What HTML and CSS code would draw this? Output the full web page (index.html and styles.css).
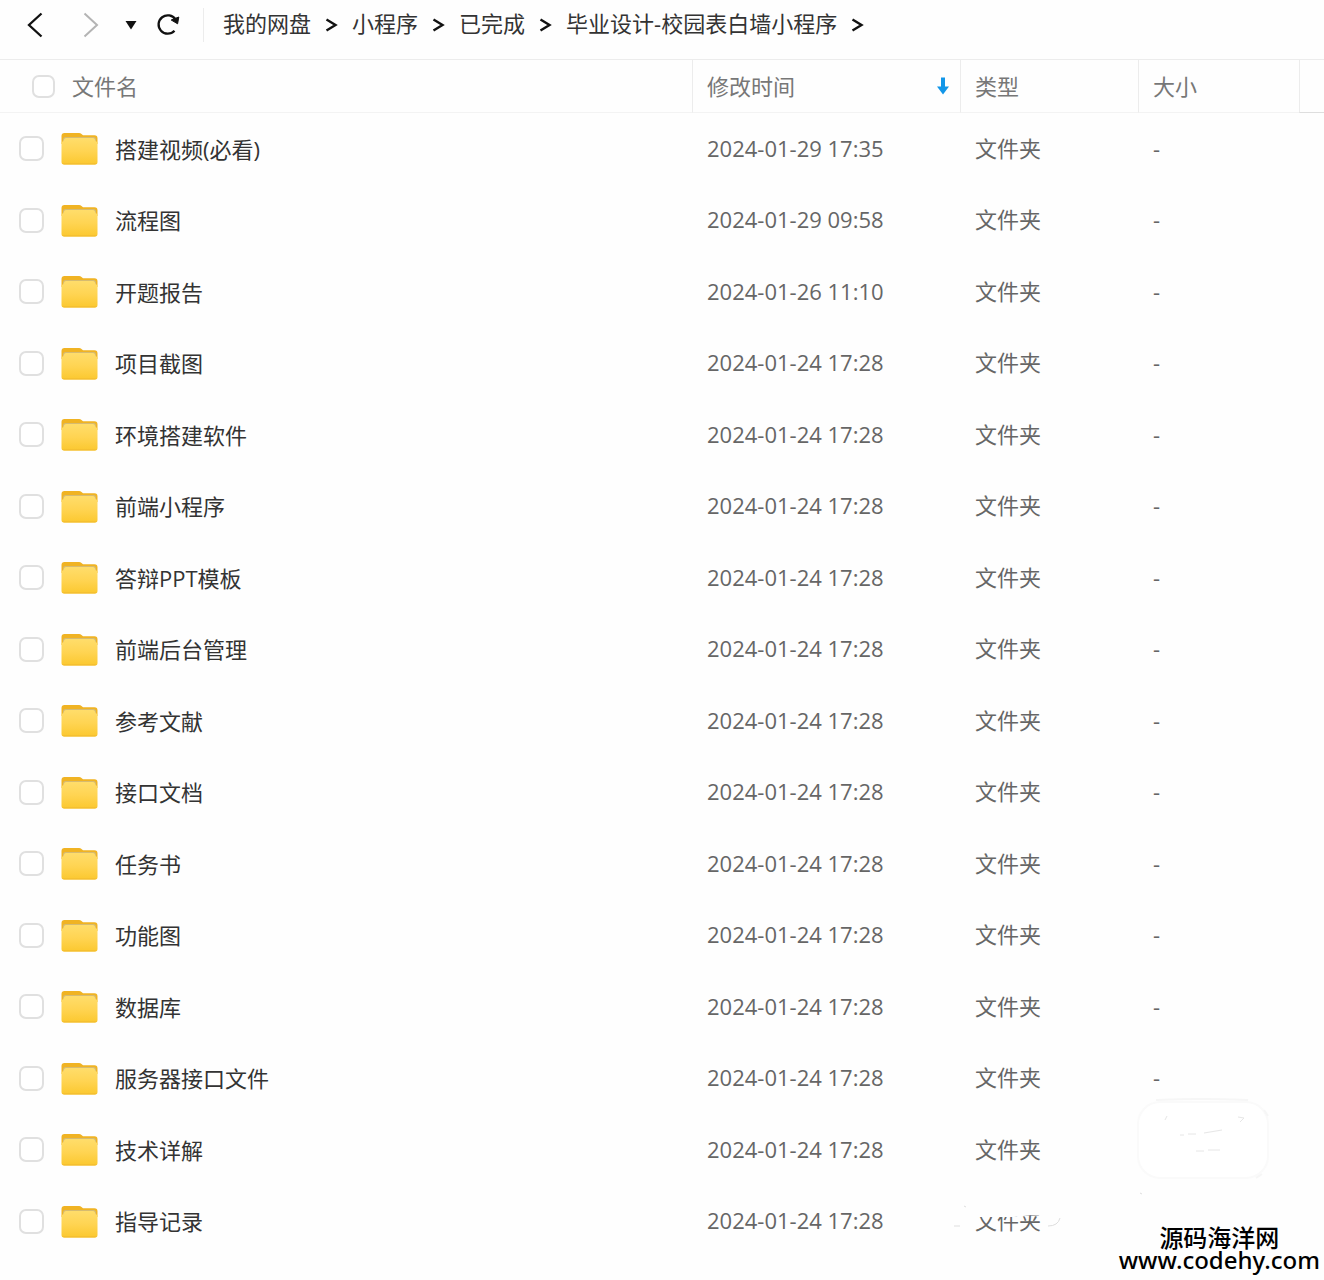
FILE: index.html
```html
<!DOCTYPE html>
<html lang="zh-CN">
<head>
    <meta charset="UTF-8">
    <meta name="viewport" content="width=device-width, initial-scale=1.0">
    <title>毕业设计-校园表白墙小程序</title>
    <link rel="stylesheet" href="styles.css">
</head>
<body>
    <svg class="sprite" width="0" height="0" aria-hidden="true">
        <defs>
            <linearGradient id="folder-front" x1="0" y1="0" x2="0" y2="1">
                <stop offset="0" stop-color="#ffdd6b"/>
                <stop offset="0.5" stop-color="#ffd452"/>
                <stop offset="1" stop-color="#fbc82f"/>
            </linearGradient>
        </defs>
        <symbol id="folder" viewBox="0 0 37 33">
            <path d="M0.500 4Q0.500 1 3.500 1H18Q19.500 1 20.500 2L22 3.200H33.500Q36.500 3.200 36.500 6.500V12H0.500Z" fill="#f0b323"/>
            <path d="M2 7.500Q2 5 4.500 5H32.500Q35 5 35 7.500V11H2Z" fill="#d6bb70"/>
            <path d="M0.500 10Q3 9.500 3 7.500 3.300 6 5 6H32Q33.700 6 34 7.500 34 9.500 36.500 10V30Q36.500 32.500 34 32.500H3Q0.500 32.500 0.500 30Z" fill="url(#folder-front)"/>
            <path d="M1 31.200Q2 32.500 3.500 32.500H33.500Q35 32.500 36 31.200Z" fill="#f3bd30"/>
        </symbol>
        <symbol id="chevron" viewBox="0 0 13 16">
            <path d="M1.500 2.500L10.500 8L1.500 13.500" fill="none" stroke="#111" stroke-width="2.400"/>
        </symbol>
    </svg>

    <div class="page">
        <header class="toolbar">
            <button class="nav-btn back" type="button" aria-label="后退">
                <svg width="16" height="26" viewBox="0 0 16 26"><path d="M14.500 1.500L2 13L14.500 24.500" fill="none" stroke="#111" stroke-width="2.300"/></svg>
            </button>
            <button class="nav-btn forward" type="button" aria-label="前进">
                <svg width="16" height="26" viewBox="0 0 16 26"><path d="M1.500 1.500L14 13L1.500 24.500" fill="none" stroke="#b4b4b4" stroke-width="2"/></svg>
            </button>
            <button class="nav-btn history" type="button" aria-label="历史记录">
                <svg width="12" height="10" viewBox="0 0 12 10"><path d="M0.500 1H11.500L6 9.500Z" fill="#111"/></svg>
            </button>
            <button class="nav-btn refresh" type="button" aria-label="刷新">
                <svg width="24" height="24" viewBox="0 0 24 24">
                    <path d="M18.500 17.800A9.200 9.200 0 1 1 19.500 6.500" fill="none" stroke="#111" stroke-width="2.300"/>
                    <path d="M15.200 7L22.800 4L21.600 10.800Z" fill="#111" stroke="#111" stroke-width="1"/>
                </svg>
            </button>
            <nav class="breadcrumb" aria-label="路径">
                <a href="#">我的网盘</a>
                <svg width="13" height="16"><use href="#chevron"/></svg>
                <a href="#">小程序</a>
                <svg width="13" height="16"><use href="#chevron"/></svg>
                <a href="#">已完成</a>
                <svg width="13" height="16"><use href="#chevron"/></svg>
                <a href="#">毕业设计-校园表白墙小程序</a>
                <svg width="13" height="16"><use href="#chevron"/></svg>
            </nav>
        </header>

        <table class="file-list">
            <colgroup>
                <col class="col-name">
                <col class="col-time">
                <col class="col-type">
                <col class="col-size">
                <col class="col-end">
            </colgroup>
            <thead>
                <tr>
                    <th><label class="select-all"><input type="checkbox"><span>文件名</span></label></th>
                    <th>
                        <button class="sort" type="button">
                            <span>修改时间</span>
                            <svg width="12" height="18" viewBox="0 0 12 18"><path d="M4 0.500H8V9.500H12L6 17.500L0 9.500H4Z" fill="#1296e8"/></svg>
                        </button>
                    </th>
                    <th>类型</th>
                    <th>大小</th>
                    <td></td>
                </tr>
            </thead>
            <tbody>
                <tr>
                    <td><label class="file"><input type="checkbox"><svg width="37" height="33"><use href="#folder"/></svg><span>搭建视频(必看)</span></label></td>
                    <td>2024-01-29 17:35</td>
                    <td>文件夹</td>
                    <td>-</td>
                    <td></td>
                </tr>
                <tr>
                    <td><label class="file"><input type="checkbox"><svg width="37" height="33"><use href="#folder"/></svg><span>流程图</span></label></td>
                    <td>2024-01-29 09:58</td>
                    <td>文件夹</td>
                    <td>-</td>
                    <td></td>
                </tr>
                <tr>
                    <td><label class="file"><input type="checkbox"><svg width="37" height="33"><use href="#folder"/></svg><span>开题报告</span></label></td>
                    <td>2024-01-26 11:10</td>
                    <td>文件夹</td>
                    <td>-</td>
                    <td></td>
                </tr>
                <tr>
                    <td><label class="file"><input type="checkbox"><svg width="37" height="33"><use href="#folder"/></svg><span>项目截图</span></label></td>
                    <td>2024-01-24 17:28</td>
                    <td>文件夹</td>
                    <td>-</td>
                    <td></td>
                </tr>
                <tr>
                    <td><label class="file"><input type="checkbox"><svg width="37" height="33"><use href="#folder"/></svg><span>环境搭建软件</span></label></td>
                    <td>2024-01-24 17:28</td>
                    <td>文件夹</td>
                    <td>-</td>
                    <td></td>
                </tr>
                <tr>
                    <td><label class="file"><input type="checkbox"><svg width="37" height="33"><use href="#folder"/></svg><span>前端小程序</span></label></td>
                    <td>2024-01-24 17:28</td>
                    <td>文件夹</td>
                    <td>-</td>
                    <td></td>
                </tr>
                <tr>
                    <td><label class="file"><input type="checkbox"><svg width="37" height="33"><use href="#folder"/></svg><span>答辩PPT模板</span></label></td>
                    <td>2024-01-24 17:28</td>
                    <td>文件夹</td>
                    <td>-</td>
                    <td></td>
                </tr>
                <tr>
                    <td><label class="file"><input type="checkbox"><svg width="37" height="33"><use href="#folder"/></svg><span>前端后台管理</span></label></td>
                    <td>2024-01-24 17:28</td>
                    <td>文件夹</td>
                    <td>-</td>
                    <td></td>
                </tr>
                <tr>
                    <td><label class="file"><input type="checkbox"><svg width="37" height="33"><use href="#folder"/></svg><span>参考文献</span></label></td>
                    <td>2024-01-24 17:28</td>
                    <td>文件夹</td>
                    <td>-</td>
                    <td></td>
                </tr>
                <tr>
                    <td><label class="file"><input type="checkbox"><svg width="37" height="33"><use href="#folder"/></svg><span>接口文档</span></label></td>
                    <td>2024-01-24 17:28</td>
                    <td>文件夹</td>
                    <td>-</td>
                    <td></td>
                </tr>
                <tr>
                    <td><label class="file"><input type="checkbox"><svg width="37" height="33"><use href="#folder"/></svg><span>任务书</span></label></td>
                    <td>2024-01-24 17:28</td>
                    <td>文件夹</td>
                    <td>-</td>
                    <td></td>
                </tr>
                <tr>
                    <td><label class="file"><input type="checkbox"><svg width="37" height="33"><use href="#folder"/></svg><span>功能图</span></label></td>
                    <td>2024-01-24 17:28</td>
                    <td>文件夹</td>
                    <td>-</td>
                    <td></td>
                </tr>
                <tr>
                    <td><label class="file"><input type="checkbox"><svg width="37" height="33"><use href="#folder"/></svg><span>数据库</span></label></td>
                    <td>2024-01-24 17:28</td>
                    <td>文件夹</td>
                    <td>-</td>
                    <td></td>
                </tr>
                <tr>
                    <td><label class="file"><input type="checkbox"><svg width="37" height="33"><use href="#folder"/></svg><span>服务器接口文件</span></label></td>
                    <td>2024-01-24 17:28</td>
                    <td>文件夹</td>
                    <td>-</td>
                    <td></td>
                </tr>
                <tr>
                    <td><label class="file"><input type="checkbox"><svg width="37" height="33"><use href="#folder"/></svg><span>技术详解</span></label></td>
                    <td>2024-01-24 17:28</td>
                    <td>文件夹</td>
                    <td></td>
                    <td></td>
                </tr>
                <tr>
                    <td><label class="file"><input type="checkbox"><svg width="37" height="33"><use href="#folder"/></svg><span>指导记录</span></label></td>
                    <td>2024-01-24 17:28</td>
                    <td>文件夹</td>
                    <td></td>
                    <td></td>
                </tr>
            </tbody>
        </table>

        <!-- faded stamp above the watermark -->
        <svg class="stamp" width="374" height="190" viewBox="0 0 374 190" aria-hidden="true">
            <path d="M10 100H200V124L128 126L100 126L82 125L64 127L40 127L22 127L10 124Z" fill="#fefefe"/>
            <rect x="188" y="12" width="130" height="76" rx="22" fill="#fff" stroke="#fafafa" stroke-width="2"/>
            <path d="M206 10Q250 8 298 10M314 20l4 6M312 84l-6 4" fill="none" stroke="#f6f6f6" stroke-width="2"/>
            <path d="M217 26l-2 4M288 27l6 1-4 4M230 45h4M238 44h8M254 43l18-3M246 61h8M258 60h12" fill="none" stroke="#e6e6e6" stroke-width="1"/>
            <path d="M14 116l2 1M4 136h6M98 136Q108 136 110 128M190 103l2 1" fill="none" stroke="#dedede" stroke-width="1"/>
        </svg>

        <div class="watermark">
            <div class="watermark-name">源码海洋网</div>
            <div class="watermark-url">www.codehy.com</div>
        </div>
    </div>
</body>
</html>
```

FILE: styles.css
```css
* {
    margin: 0;
    padding: 0;
    box-sizing: border-box;
}

body {
    font-family: "Open Sans", "Noto Sans CJK SC", sans-serif;
    font-size: 22px;
    line-height: 30px;
    color: #333;
    background: #fefefe;
}

.sprite {
    position: absolute;
}

.page {
    position: relative;
    min-height: 100vh;
    overflow: hidden;
}

/* Toolbar */
.toolbar {
    display: flex;
    align-items: center;
    height: 60px;
    padding: 0 20px 10px 27px;
    border-bottom: 1px solid #ececec;
}

.nav-btn {
    display: flex;
    flex: none;
    border: none;
    background: none;
    cursor: pointer;
}

.forward {
    margin-left: 40px;
}

.history {
    margin-left: 26px;
}

.refresh {
    margin-left: 19px;
}

.breadcrumb {
    display: flex;
    align-items: center;
    gap: 14px;
    margin-left: 23px;
    padding-left: 19px;
    border-left: 1px solid #ececec;
    white-space: nowrap;
}

.breadcrumb a {
    padding-bottom: 4px;
    color: #333;
    text-decoration: none;
}

/* File list */
.file-list {
    width: 100%;
    table-layout: fixed;
    border-collapse: separate;
    border-spacing: 0;
}

.col-time {
    width: 268px;
}

.col-type {
    width: 178px;
}

.col-size {
    width: 161px;
}

.col-end {
    width: 25px;
}

thead th,
thead td {
    height: 53px;
    padding-left: 14px;
    border-left: 1px solid #ececec;
    border-bottom: 1px solid #f3f3f3;
    font-weight: 400;
    text-align: left;
    color: #777;
}

thead th:first-child {
    padding-left: 32px;
    border-left: none;
}

thead td {
    border-bottom-color: #dedede;
}

tbody td {
    height: 71px;
    padding-left: 15px;
    padding-bottom: 2px;
    color: #666;
}

tbody tr:nth-child(even) td {
    height: 72px;
}

tbody td:first-child {
    padding-left: 19px;
    padding-bottom: 0;
}

.select-all,
.file {
    display: flex;
    align-items: center;
    gap: 17px;
}

.file {
    color: #333;
}

input[type="checkbox"] {
    appearance: none;
    flex: none;
    width: 25px;
    height: 25px;
    border: 2px solid #e0e0e0;
    border-radius: 7px;
    background: #fff;
}

.select-all input[type="checkbox"] {
    width: 23px;
    height: 23px;
}

input[type="checkbox"]:checked {
    border-color: #1296e8;
    background: #1296e8;
}

.sort {
    display: flex;
    align-items: center;
    justify-content: space-between;
    width: 100%;
    padding-right: 11px;
    border: none;
    background: none;
    font: inherit;
    color: inherit;
    cursor: pointer;
}

/* Overlays in the bottom right corner */
.stamp {
    position: absolute;
    right: 0;
    bottom: 0;
    pointer-events: none;
}

.watermark {
    position: absolute;
    right: 4px;
    bottom: 9px;
    font-family: "Noto Sans", "Noto Sans CJK SC", sans-serif;
    font-size: 24px;
    font-weight: 500;
    line-height: 22px;
    text-align: center;
    color: #000;
}
```
